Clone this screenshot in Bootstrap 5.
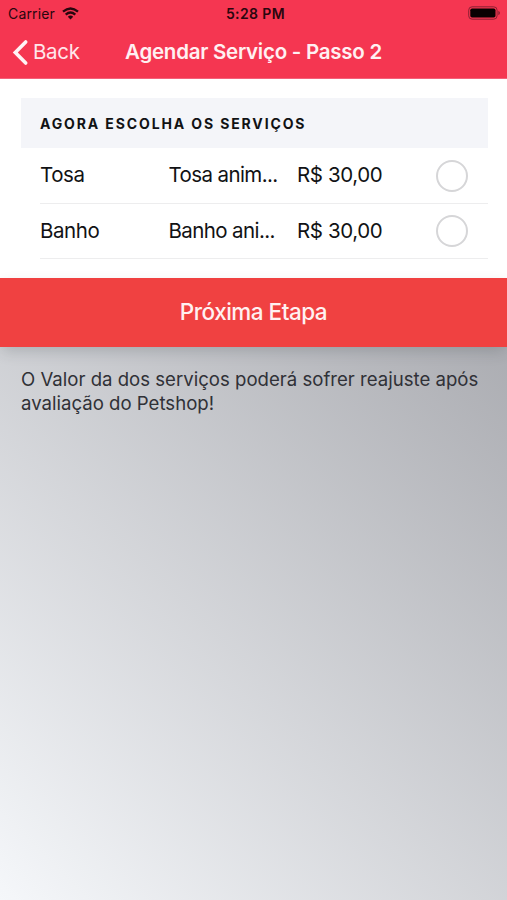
<!DOCTYPE html>
<html lang="pt-BR">
<head>
<meta charset="utf-8">
<meta name="viewport" content="width=device-width, initial-scale=1">
<title>Agendar Serviço - Passo 2</title>
<link href="https://cdn.jsdelivr.net/npm/bootstrap@5.3.0/dist/css/bootstrap.min.css" rel="stylesheet">
<style>
body{font-family:Inter,"Liberation Sans",sans-serif;background:linear-gradient(45deg,#f5f7fa,#94959b);color:#111214;white-space:nowrap}
.app-header{background:#f53651;height:79px;border-bottom:1px solid #f4607a}
.status-bar{height:26px;padding:0 6px 0 8px;color:#29060e}
.status-bar>*{flex:1 1 0}
.carrier{font-size:14px;letter-spacing:.15px}
.clock{font-size:14px;font-weight:600;letter-spacing:.4px;padding:2px 0 0 2px}
.title-bar{display:grid;grid-template-columns:1fr auto 1fr;height:52px;padding:0 12px}
.back-link{font-size:20.5px;color:#ffe6ea;letter-spacing:-.3px}
.screen-title{font-size:20.5px;font-weight:600;color:#fff0f2;letter-spacing:-.26px;padding-top:1px}
.wifi{margin-left:7px}
.services{height:199px;padding:19px 19px 0 21px}
.services-head{height:50px;padding-left:19px;background:#f4f5f9;font-size:14px;font-weight:700;letter-spacing:1.87px}
.service{display:grid;grid-template-columns:128.5px 128.5px 1fr auto;height:55.5px;margin-left:19px;padding:1px 20px 0 0;border-bottom:1.5px solid #ededee;font-size:20.5px;letter-spacing:-.4px}
.service-desc{padding-right:19px;letter-spacing:-.6px}
.pick{width:32px;height:32px;border:2px solid #d6d6d8;border-radius:50%;background:#fff}
.next-step{height:68.5px;background:#f04141;font-size:22.5px;font-weight:500;letter-spacing:-.5px;color:#fff1f1;box-shadow:0 6px 14px -2px rgba(40,50,55,.2)}
.notice{padding:20px 20px 0 21px;font-size:18.6px;line-height:24.5px;color:#303137}
</style>
<script src="https://cdn.jsdelivr.net/npm/bootstrap@5.3.0/dist/js/bootstrap.bundle.min.js"></script>
</head>
<body class="min-vh-100 overflow-hidden">
<header class="app-header">
  <div class="status-bar d-flex align-items-center">
    <div class="d-flex align-items-center"><span class="carrier">Carrier</span>
      <svg class="wifi" width="17" height="13" viewBox="0 0 17 13" fill="none" stroke="#29060e" stroke-width="2.3"><path d="M1 4.7Q8.5-1.7 16 4.7M3.7 7.6Q8.5 3.4 13.3 7.6"/><path d="M5.8 9.7Q8.5 7.5 11.2 9.7L8.5 12.6Z" fill="#29060e" stroke="none"/></svg>
    </div>
    <div class="clock text-center lh-1"><span>5:28 PM</span></div>
    <div class="d-flex justify-content-end"><svg width="33" height="14" viewBox="0 0 33 14"><rect x=".7" y=".8" width="28.4" height="12.4" rx="3.4" fill="none" stroke="#8c2033"/><rect x="2.3" y="2.4" width="25.2" height="9.2" rx="1.8" fill="#080102"/><path d="M30.3 4.8Q32 5.5 32 7T30.3 9.2Z" fill="#8c2033"/></svg></div>
  </div>
  <nav class="title-bar align-items-center">
    <a href="#" class="back-link d-flex align-items-center text-decoration-none"><svg class="me-1" width="17" height="27" viewBox="0 0 17 27" fill="none" stroke="#fff3f5" stroke-width="3.6" stroke-linecap="round" stroke-linejoin="miter"><path d="M13.7 3L3.3 13.5L13.7 24"/></svg><span>Back</span></a>
    <h1 class="screen-title mb-0"><span>Agendar Serviço - Passo 2</span></h1>
    <span></span>
  </nav>
</header>
<main>
  <section class="services bg-white">
    <div class="services-head d-flex align-items-center text-uppercase"><span>Agora escolha os serviços</span></div>
    <div class="service align-items-center"><span>Tosa</span><span class="service-desc">Tosa anim...</span><span>R$ 30,00</span><span class="pick"></span></div>
    <div class="service align-items-center"><span>Banho</span><span class="service-desc">Banho ani...</span><span>R$ 30,00</span><span class="pick"></span></div>
  </section>
  <button type="button" class="next-step d-flex w-100 border-0 align-items-center justify-content-center"><span>Próxima Etapa</span></button>
  <p class="notice mb-0">O Valor da dos serviços poderá sofrer reajuste após<br>avaliação do Petshop!</p>
</main>
</body>
</html>
